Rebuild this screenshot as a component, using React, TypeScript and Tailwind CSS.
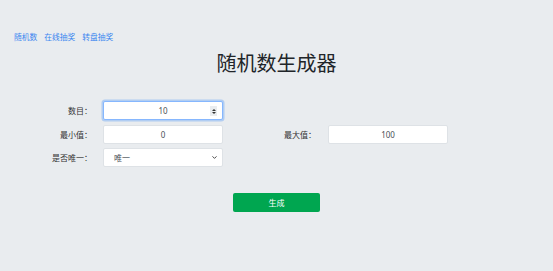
import { ChevronDown } from "lucide-react";

const font = { fontFamily: '"Noto Sans", "Noto Sans CJK SC", sans-serif' };

function Field({ value, focused }: { value: string; focused?: boolean }) {
  return (
    <div
      className={`relative h-[19px] w-[120px] rounded-[2px] bg-white flex items-center justify-center text-[8px] text-[#495057] border ${
        focused ? "border-[#86b7fe] shadow-[0_0_0_1.5px_rgba(13,110,253,0.25)]" : "border-[#dee2e6]"
      }`}
    >
      <span>{value}</span>
      {focused && (
        <div className="absolute right-[5px] top-[4px] h-[10px] w-[7px] bg-[#e9ecef] flex flex-col items-center justify-center gap-[1px]">
          <div className="w-0 h-0 border-l-[2px] border-r-[2px] border-b-[2.5px] border-l-transparent border-r-transparent border-b-[#333]" />
          <div className="w-0 h-0 border-l-[2px] border-r-[2px] border-t-[2.5px] border-l-transparent border-r-transparent border-t-[#333]" />
        </div>
      )}
    </div>
  );
}

export default function App() {
  return (
    <div className="w-[553px] h-[271px] bg-[#e9ecef] text-[#212529] overflow-hidden" style={font}>
      <div className="pt-[32px] pl-[14px] flex gap-[7px] text-[7.75px] leading-[10px] text-[#3a86f0]">
        <span>随机数</span>
        <span>在线抽奖</span>
        <span>转盘抽奖</span>
      </div>

      <h1 className="mt-[10px] text-center text-[20px] leading-[24px] text-[#212529]">随机数生成器</h1>

      <div className="mt-[25px] text-[8px] text-[#333]">
        <div className="flex items-center h-[19px]">
          <div className="w-[92px] text-right">数目：</div>
          <div className="ml-[11px]">
            <Field value="10" focused />
          </div>
        </div>

        <div className="flex items-center h-[19px] mt-[5px]">
          <div className="w-[92px] text-right">最小值：</div>
          <div className="ml-[11px]">
            <Field value="0" />
          </div>
          <div className="w-[93px] text-right">最大值：</div>
          <div className="ml-[12px]">
            <Field value="100" />
          </div>
        </div>

        <div className="flex items-center h-[19px] mt-[4px]">
          <div className="w-[92px] text-right">是否唯一：</div>
          <div className="ml-[11px]">
            <div className="h-[19px] w-[120px] rounded-[2px] bg-white border border-[#dee2e6] flex items-center pl-[10px] pr-[4px] text-[8px] text-[#495057]">
              <span>唯一</span>
              <ChevronDown className="ml-auto" size={7} strokeWidth={3} color="#333" />
            </div>
          </div>
        </div>
      </div>

      <div className="mt-[26px] flex justify-center">
        <button className="h-[19px] w-[87px] rounded-[2px] bg-[#00a650] text-white text-[8px] flex items-center justify-center">
          生成
        </button>
      </div>
    </div>
  );
}
